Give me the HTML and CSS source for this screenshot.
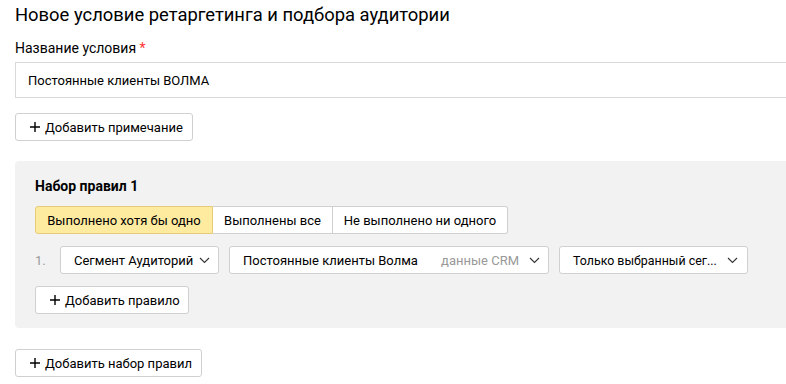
FILE: index.html
```html
<!DOCTYPE html>
<html lang="ru">
<head>
<meta charset="utf-8">
<link rel="stylesheet" href="styles.css">
</head>
<body>
<div class="page">
  <h1 class="title">Новое условие ретаргетинга и подбора аудитории</h1>
  <div class="label">Название условия <span class="req">*</span></div>
  <div class="input">Постоянные клиенты ВОЛМА</div>
  <div class="row-btn r-note"><button class="btn w-note"><svg class="plus" width="10" height="10" viewBox="0 0 10 10"><path d="M5 0v10M0 5h10" stroke="#000" stroke-width="1.4"/></svg>Добавить примечание</button></div>

  <section class="panel">
    <div class="panel-title">Набор правил 1</div>
    <div class="seg">
      <div class="seg-item active w1">Выполнено хотя бы одно</div>
      <div class="seg-item w2">Выполнены все</div>
      <div class="seg-item w3">Не выполнено ни одного</div>
    </div>
    <div class="rule">
      <span class="num">1.</span>
      <div class="select s1"><span class="sel-text">Сегмент Аудиторий</span><svg class="chev" width="11" height="7" viewBox="0 0 11 7"><path d="M1 1l4.5 4.5L10 1" fill="none" stroke="#333" stroke-width="1.1"/></svg></div>
      <div class="select s2"><span class="sel-text">Постоянные клиенты Волма</span><span class="hint">данные CRM</span><svg class="chev" width="11" height="7" viewBox="0 0 11 7"><path d="M1 1l4.5 4.5L10 1" fill="none" stroke="#333" stroke-width="1.1"/></svg></div>
      <div class="select s3"><span class="sel-text fit">Только выбранный сег...</span><svg class="chev push" width="11" height="7" viewBox="0 0 11 7"><path d="M1 1l4.5 4.5L10 1" fill="none" stroke="#333" stroke-width="1.1"/></svg></div>
    </div>
    <div class="row-btn r-rule"><button class="btn w-rule"><svg class="plus" width="10" height="10" viewBox="0 0 10 10"><path d="M5 0v10M0 5h10" stroke="#000" stroke-width="1.4"/></svg>Добавить правило</button></div>
  </section>

  <div class="row-btn r-set"><button class="btn w-set"><svg class="plus" width="10" height="10" viewBox="0 0 10 10"><path d="M5 0v10M0 5h10" stroke="#000" stroke-width="1.4"/></svg>Добавить набор правил</button></div>
</div>
</body>
</html>
```
FILE: styles.css
```css
* { box-sizing: border-box; }
html, body { margin: 0; padding: 0; background: #fff; overflow: hidden; }
body { font-family: Roboto, "Liberation Sans", Arial, sans-serif; color: #000; }
.page { width: 820px; padding: 3px 0 0 15px; }
.title { margin: 0; font-size: 18.4px; font-weight: 400; line-height: 24px; color: #000; }
.label { margin-top: 12px; font-size: 14px; line-height: 18px; color: #000; }
.req { color: #f33; }
.input { margin-top: 5px; height: 36px; border: 1px solid #d9d9d9; border-right: none; display: flex; align-items: center; padding-left: 12px; font-size: 13px; }
.row-btn { display: flex; }
.btn { font-family: inherit; height: 28px; border: 1px solid #d0d0d0; border-radius: 3px; background: #fff; font-size: 13px; color: #000; padding: 0 0 0 14px; display: flex; align-items: center; gap: 5px; cursor: pointer; }
.plus { flex: none; }
.w-note { width: 178px; }
.w-rule { width: 154px; }
.w-set { width: 187px; }
.r-note { margin-top: 15px; }
.panel { margin-top: 20px; background: #f2f2f2; border-radius: 4px 0 0 4px; padding: 16px 0 14px 20px; }
.panel-title { font-size: 14px; font-weight: 700; line-height: 18px; }
.seg { margin-top: 11px; display: flex; width: max-content; }
.seg-item { height: 28px; display: flex; align-items: center; justify-content: center; font-size: 13px; background: #fff; border: 1px solid #d0d0d0; border-left: none; }
.seg-item:first-child { border-left: 1px solid #d0d0d0; border-radius: 3px 0 0 3px; }
.seg-item:last-child { border-radius: 0 3px 3px 0; }
.seg-item.active { background: #ffeba0; border-color: #e6cc7a; }
.w1 { width: 178px; }
.w2 { width: 120px; }
.w3 { width: 175px; }
.rule { margin-top: 12px; display: flex; align-items: center; gap: 10px; }
.num { font-size: 13px; color: #999; width: 15px; }
.select { height: 28px; background: #fff; border: 1px solid #d0d0d0; border-radius: 3px; display: flex; align-items: center; padding: 0 8px 0 13px; font-size: 13px; }
.s1 { width: 159px; }
.s2 { width: 320px; }
.s3 { width: 189px; padding-right: 9px; }
.sel-text { flex: 1; white-space: nowrap; overflow: hidden; }
.sel-text.fit { flex: none; overflow: visible; font-size: 12.4px; }
.hint { color: #999; margin-right: 5px; }
.chev { margin-left: 5px; flex: none; }
.chev.push { margin-left: auto; }
.r-rule { margin-top: 12px; }
.r-set { margin-top: 21px; }
```
